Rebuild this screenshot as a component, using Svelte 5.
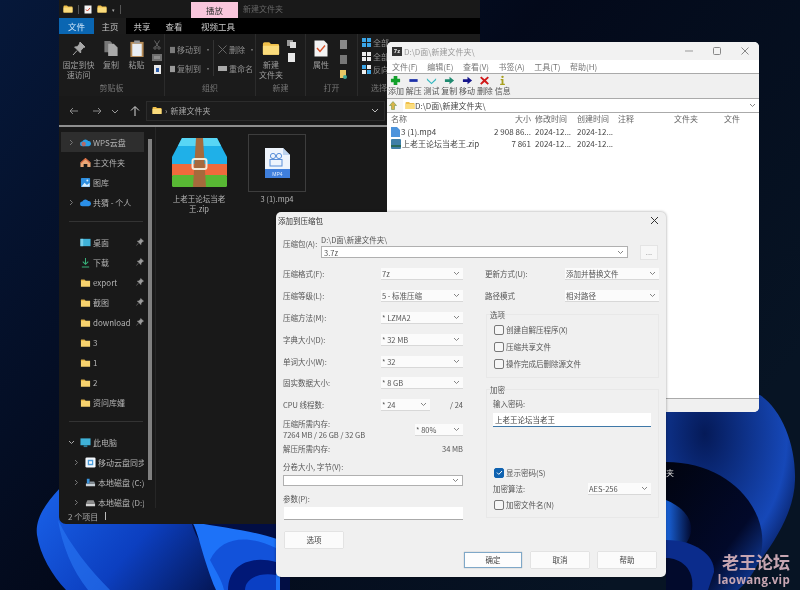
<script>
  const quick = [
    { name: "WPS云盘", icon: "cloudw", arrow: true, active: true },
    { name: "主文件夹", icon: "home" },
    { name: "图库", icon: "gallery" },
    { name: "共猜 - 个人", icon: "cloud", arrow: true, gap: true },
    { name: "桌面", icon: "desk", pin: true },
    { name: "下载", icon: "down", pin: true },
    { name: "export", icon: "folder", pin: true },
    { name: "截图", icon: "folder", pin: true },
    { name: "download", icon: "folder", pin: true },
    { name: "3", icon: "folder" },
    { name: "1", icon: "folder" },
    { name: "2", icon: "folder" },
    { name: "资问库媑", icon: "folder", gap: true },
    { name: "此电脑", icon: "pc", open: true },
    { name: "移动云盘同步盘", icon: "mobile", arrow: true, sub: true },
    { name: "本地磁盘 (C:)", icon: "diskc", arrow: true, sub: true },
    { name: "本地磁盘 (D:)", icon: "disk", arrow: true, sub: true },
  ];

  const szTools = [
    { label: "添加", color: "#12a02a", shape: "plus" },
    { label: "解压", color: "#1c2fa8", shape: "minus" },
    { label: "测试", color: "#35b8c0", shape: "tick" },
    { label: "复制", color: "#1f8a70", shape: "arrow" },
    { label: "移动", color: "#15158a", shape: "arrow" },
    { label: "删除", color: "#d01818", shape: "x" },
    { label: "信息", color: "#a8a020", shape: "info" },
  ];

  const leftRows = [
    { label: "压缩格式(F):", value: "7z" },
    { label: "压缩等级(L):", value: "5 - 标准压缩" },
    { label: "压缩方法(M):", value: "* LZMA2" },
    { label: "字典大小(D):", value: "* 32 MB" },
    { label: "单词大小(W):", value: "* 32" },
    { label: "固实数据大小:", value: "* 8 GB" },
  ];
</script>

{#snippet folder(w, h)}
  <svg width={w} height={h} viewBox="0 0 20 16">
    <path d="M1 3 Q1 1 3 1 H8 L10 3 H18 Q19 3 19 5 V14 Q19 15 18 15 H2 Q1 15 1 14 Z" fill="#f0c04a" />
    <path d="M1 5 H19 V14 Q19 15 18 15 H2 Q1 15 1 14 Z" fill="#fbdc7c" />
  </svg>
{/snippet}

{#snippet chevron()}
  <svg class="chev" width="7" height="5" viewBox="0 0 7 5"><path d="M1 1 L3.5 3.5 L6 1" fill="none" stroke="#777" stroke-width="0.9" /></svg>
{/snippet}

{#snippet pin()}
  <svg width="8" height="8" viewBox="0 0 10 10"><path d="M6 0.5 L9.5 4 L8 4.6 L6.4 6.6 L6.2 8.4 L1.6 3.8 L3.4 3.6 L5.4 2 Z M3 6.4 L0.6 9.4" fill="#9a9a9a" stroke="#9a9a9a" stroke-width="0.6" /></svg>
{/snippet}

{#snippet sideIcon(kind)}
  <svg class="side-ic" width="11" height="11" viewBox="0 0 12 12">
    {#if kind === "folder"}
      <path d="M1 3 H5 L6 4 H11 V10.5 H1 Z" fill="#f7d26e" /><path d="M1 3 H5 L6 4 H1 Z" fill="#e2ac3a" />
    {:else if kind === "cloudw"}
      <path d="M2.5 10 A2.5 2.5 0 0 1 2.5 5 A3.6 3.6 0 0 1 9 4.4 A2.8 2.8 0 0 1 9.4 10 Z" fill="#2a9fe6" /><circle cx="4" cy="7.6" r="2.4" fill="#e0593f" opacity="0.75" />
    {:else if kind === "cloud"}
      <path d="M2.5 10 A2.5 2.5 0 0 1 2.5 5 A3.6 3.6 0 0 1 9 4.4 A2.8 2.8 0 0 1 9.4 10 Z" fill="#2b8fe8" />
    {:else if kind === "home"}
      <path d="M6 1 L11.5 6 V11 H8 V7.5 H4 V11 H0.5 V6 Z" fill="#e9a877" /><path d="M6 1 L11.5 6 L10.6 6.8 L6 2.6 L1.4 6.8 L0.5 6 Z" fill="#d9663d" />
    {:else if kind === "gallery"}
      <rect x="1" y="1" width="10" height="10" rx="1" fill="#2e8fe0" /><path d="M1.5 10.5 L5 6.4 L7.6 8.6 L10.5 6.4 V10.5 Z" fill="#d9eefc" /><circle cx="8" cy="3.8" r="1.1" fill="#d9eefc" />
    {:else if kind === "desk"}
      <rect x="0.5" y="2" width="11" height="8" fill="#3fb2d8" /><rect x="0.5" y="2" width="3" height="8" fill="#7ad0ea" />
    {:else if kind === "down"}
      <path d="M6 1 V8 M3 5 L6 8 L9 5 M2 11 H10" fill="none" stroke="#38b27a" stroke-width="1.1" />
    {:else if kind === "pc"}
      <rect x="0.5" y="1.5" width="11" height="7.5" fill="#3fb2d8" /><rect x="4" y="9" width="4" height="2" fill="#2b7f9c" />
    {:else if kind === "mobile"}
      <rect x="0.5" y="0.5" width="11" height="11" rx="1.5" fill="#f4f8fc" /><rect x="3" y="3" width="6" height="6" fill="#4d9edb" /><rect x="4.4" y="4.6" width="3.2" height="2.8" fill="#f4f8fc" />
    {:else if kind === "diskc"}
      <path d="M1 7 H11 V10 H1 Z" fill="#c9d0d6" /><path d="M2 2 H5 V7 H2 Z" fill="#3a93dc" /><path d="M5 5 H10 L11 7 H5 Z" fill="#88929a" />
    {:else}
      <path d="M1 7 H11 V10 H1 Z" fill="#d2d2d2" /><path d="M2.6 3.6 H9.4 L11 7 H1 Z" fill="#8c8c8c" />
    {/if}
  </svg>
{/snippet}

{#snippet szIcon(tool)}
  <svg width="11" height="11" viewBox="0 0 12 12">
    {#if tool.shape === "plus"}
      <path d="M4 1 H8 V4 H11 V8 H8 V11 H4 V8 H1 V4 H4 Z" fill={tool.color} />
    {:else if tool.shape === "minus"}
      <rect x="1.5" y="4.5" width="9" height="3" fill={tool.color} />
    {:else if tool.shape === "tick"}
      <path d="M1 3.5 L6 8.5 L11 3.5 L11 5.5 L6 10 L1 5.5 Z" fill={tool.color} />
    {:else if tool.shape === "arrow"}
      <path d="M1 4.5 H6 V2 L11 6 L6 10 V7.5 H1 Z" fill={tool.color} />
    {:else if tool.shape === "x"}
      <path d="M2.5 1.5 L6 4.6 L9.5 1.5 L10.8 3 L7.6 6 L10.8 9.2 L9.4 10.6 L6 7.5 L2.6 10.6 L1.2 9.2 L4.4 6 L1.2 3 Z" fill={tool.color} />
    {:else}
      <circle cx="6" cy="2" r="1.3" fill={tool.color} /><path d="M4 4.4 H7 V9.6 H8.6 V11 H3.4 V9.6 H5 V5.8 H4 Z" fill={tool.color} />
    {/if}
  </svg>
{/snippet}

<div class="desktop">
  <svg class="wallpaper" width="800" height="590" viewBox="0 0 800 590">
    <defs>
      <linearGradient id="base" x1="0" y1="0" x2="1" y2="0.6">
        <stop offset="0" stop-color="#06183a" /><stop offset="0.5" stop-color="#03091a" /><stop offset="1" stop-color="#071424" />
      </linearGradient>
      <linearGradient id="sweep" x1="0" y1="0" x2="1" y2="0.4">
        <stop offset="0" stop-color="#1b66ee" /><stop offset="0.55" stop-color="#0c3fc0" /><stop offset="1" stop-color="#03124a" />
      </linearGradient>
      <radialGradient id="orb" cx="0.3" cy="0.2" r="0.85">
        <stop offset="0" stop-color="#051a58" /><stop offset="0.75" stop-color="#1648b8" /><stop offset="1" stop-color="#061a58" />
      </radialGradient>
      <linearGradient id="fold" x1="0" y1="0" x2="1" y2="1">
        <stop offset="0" stop-color="#01040f" /><stop offset="0.65" stop-color="#02092a" /><stop offset="1" stop-color="#1446b4" />
      </linearGradient>
      <linearGradient id="fold2" x1="0" y1="0" x2="1" y2="0">
        <stop offset="0" stop-color="#1a66e0" /><stop offset="1" stop-color="#020a30" />
      </linearGradient>
    </defs>
    <rect width="800" height="590" fill="url(#base)" />
    <path d="M60 488 C44 505 35 520 37 535 C40 555 52 575 66 590 L290 590 L290 470 L60 470 Z" fill="url(#sweep)" />
    <path d="M58 520 C62 545 72 570 88 590 L110 590 C90 570 70 545 58 520 Z" fill="#2a78f5" opacity="0.6" />
    <path d="M192 524 C200 555 235 575 262 590 L290 590 L290 524 Z" fill="#020e44" />
    <path d="M192 522 C198 530 203 560 216 590 L280 590 L280 540 C250 530 225 528 192 522 Z" fill="#1d72f8" />
    <path d="M210 560 C222 535 250 535 276 548 L276 590 L224 590 C222 580 215 570 210 560 Z" fill="#1252da" />
    <path d="M228 590 C228 565 250 555 276 562 L276 590 Z" fill="#011877" />
    <path d="M245 590 C245 578 260 572 276 575 L276 590 Z" fill="#0a3fc4" />
    <path d="M666 412 L760 395 C782 410 796 445 795 480 C794 520 765 555 738 590 L666 590 Z" fill="url(#orb)" />
    <path d="M666 462 C710 462 745 485 758 518 C770 550 755 575 738 590 L666 590 Z" fill="url(#fold)" />
    <path d="M666 500 C690 510 700 530 682 548 L666 545 Z" fill="url(#fold2)" />
    <path d="M666 540 C695 540 715 555 714 572 L708 590 L666 590 Z" fill="#0b2c8c" />
    <path d="M666 558 C680 558 695 568 692 590 L666 590 Z" fill="#020a2c" />
  </svg>
  <span class="desk-label">夹</span>

  <section class="win explorer">
    <header class="ex-title">
      <div class="qat">
        {@render folder(10, 8)}
        <i class="sep"></i>
        <svg width="8" height="9" viewBox="0 0 8 9"><rect x="0.5" y="0.5" width="7" height="8" fill="#f4f4f4" /><path d="M2 4.5 L3.4 6 L6 3" fill="none" stroke="#d8442c" /></svg>
        {@render folder(10, 8)}
        <span class="qdrop">▾</span>
        <i class="sep"></i>
      </div>
      <div class="play-tab">播放</div>
      <div class="ex-name">新建文件夹</div>
    </header>

    <nav class="ex-tabs">
      <span class="tab file">文件</span>
      <span class="tab home">主页</span>
      <span class="tab">共享</span>
      <span class="tab">查看</span>
      <span class="tab wide">视频工具</span>
    </nav>

    <div class="ribbon">
      <div class="group clip">
        <div class="gbody">
          <div class="big first">
            <svg width="14" height="15" viewBox="0 0 14 15"><path d="M8 1 L13 6 L11.4 6.6 L8.8 9.4 L8.6 12 L2.6 6 L5.2 5.8 L7.6 3 Z M5 9.6 L1 14" fill="#a8a8a8" stroke="#a8a8a8" /></svg>
            <span>固定到快<br />速访问</span>
          </div>
          <div class="big">
            <svg width="16" height="18" viewBox="0 0 16 18"><path d="M1 1 H7 L9 3 V13 H1 Z" fill="#777" /><path d="M5 4 H11 L15 8 V17 H5 Z" fill="#a9a9a9" /></svg>
            <span>复制</span>
          </div>
          <div class="big">
            <svg width="16" height="18" viewBox="0 0 16 18"><rect x="1" y="2" width="14" height="16" fill="#b48a56" /><rect x="3" y="4" width="10" height="13" fill="#e9eef4" /><rect x="5" y="0.5" width="6" height="3" fill="#999" /></svg>
            <span>粘贴</span>
          </div>
          <div class="smalls">
            <svg width="8" height="10" viewBox="0 0 8 10"><path d="M1.5 0.5 L5.5 7 M6.5 0.5 L2.5 7" stroke="#666" fill="none" /><circle cx="2" cy="8" r="1.2" fill="none" stroke="#666" /><circle cx="6" cy="8" r="1.2" fill="none" stroke="#666" /></svg>
            <svg width="10" height="7" viewBox="0 0 10 7"><rect width="10" height="7" fill="#6e6e6e" /><rect x="2" y="2" width="6" height="3" fill="#8e8e8e" /></svg>
            <svg width="7" height="9" viewBox="0 0 7 9"><rect width="7" height="9" fill="#e8e8e8" /><rect x="2" y="3" width="3" height="4" fill="#2d5fae" /></svg>
          </div>
        </div>
        <div class="gname">剪贴板</div>
      </div>

      <div class="group org">
        <div class="gbody">
          <div class="lines move">
            <div class="line"><svg width="8" height="10" viewBox="0 0 8 10"><rect width="8" height="10" fill="#7b7b7b" /></svg>移动到<em>·</em></div>
            <div class="line"><svg width="8" height="10" viewBox="0 0 8 10"><rect width="8" height="10" fill="#9a9a9a" /></svg>复制到<em>·</em></div>
          </div>
          <i class="vline"></i>
          <div class="lines erase">
            <div class="line"><svg width="9" height="9" viewBox="0 0 9 9"><path d="M0.5 0.5 L8.5 8.5 M8.5 0.5 L0.5 8.5" stroke="#666" /></svg>删除<em>·</em></div>
            <div class="line"><svg width="9" height="5" viewBox="0 0 9 5"><rect width="9" height="5" fill="#aaa" /></svg>重命名</div>
          </div>
        </div>
        <div class="gname">组织</div>
      </div>

      <div class="group newg">
        <div class="gbody">
          <div class="big wide">
            {@render folder(18, 15)}
            <span>新建<br />文件夹</span>
          </div>
          <div class="smalls tight">
            <svg width="9" height="8" viewBox="0 0 9 8"><rect width="6" height="6" fill="#999" /><rect x="3" y="2" width="6" height="6" fill="#ddd" /></svg>
            <svg width="7" height="9" viewBox="0 0 7 9"><rect width="7" height="9" fill="#e8e8e8" /></svg>
          </div>
        </div>
        <div class="gname">新建</div>
      </div>

      <div class="group openg">
        <div class="gbody">
          <div class="big wide">
            <svg width="14" height="17" viewBox="0 0 14 17"><path d="M0.5 0.5 H10 L13.5 4 V16.5 H0.5 Z" fill="#f3f3f3" /><path d="M3 8 L6 11.5 L11 5.5" stroke="#d8542c" stroke-width="1.4" fill="none" /></svg>
            <span>属性</span>
          </div>
          <div class="smalls wider">
            <svg width="7" height="9" viewBox="0 0 7 9"><rect width="7" height="9" fill="#888" /></svg>
            <svg width="7" height="9" viewBox="0 0 7 9"><rect width="7" height="9" fill="#777" /></svg>
            <svg width="7" height="9" viewBox="0 0 7 9"><rect width="6" height="8" fill="#e8c866" /><circle cx="5" cy="7" r="2" fill="#4a9" /></svg>
          </div>
        </div>
        <div class="gname">打开</div>
      </div>

      <div class="group sel">
        <div class="gbody">
          <div class="lines select">
            <div class="line"><svg width="9" height="9" viewBox="0 0 9 9"><path d="M0 0 H4 V4 H0 Z M5 0 H9 V4 H5 Z M0 5 H4 V9 H0 Z M5 5 H9 V9 H5 Z" fill="#3ba6e8" /></svg>全部</div>
            <div class="line"><svg width="9" height="9" viewBox="0 0 9 9"><path d="M0 0 H4 V4 H0 Z M5 0 H9 V4 H5 Z M0 5 H4 V9 H0 Z M5 5 H9 V9 H5 Z" fill="#eee" /></svg>全部</div>
            <div class="line"><svg width="9" height="9" viewBox="0 0 9 9"><path d="M0 0 H4 V4 H0 Z M5 5 H9 V9 H5 Z" fill="#3ba6e8" /><path d="M5 0 H9 V4 H5 Z M0 5 H4 V9 H0 Z" fill="#eee" /></svg>反向</div>
          </div>
        </div>
        <div class="gname">选择</div>
      </div>
    </div>

    <div class="ex-nav">
      <svg width="72" height="12" viewBox="0 0 72 12" class="navbtns">
        <path d="M2 6 H10 M5 3 L2 6 L5 9" stroke="#8a8a8a" fill="none" />
        <path d="M25 6 H33 M30 3 L33 6 L30 9" stroke="#8a8a8a" fill="none" />
        <path d="M44 5 L47 8 L50 5" stroke="#999" fill="none" />
        <path d="M67 11 V2 M63 5.5 L67 1.5 L71 5.5" stroke="#d8d8d8" fill="none" />
      </svg>
      <div class="ex-addr">
        {@render folder(10, 9)}
        <span class="crumb">›</span>
        <span>新建文件夹</span>
        <svg class="addr-chev" width="8" height="5" viewBox="0 0 8 5"><path d="M1 1 L4 4 L7 1" stroke="#bbb" fill="none" /></svg>
      </div>
    </div>

    <div class="ex-body">
      <aside class="side">
        {#each quick as item}
          <div class="side-item" class:active={item.active} class:sub={item.sub}>
            <span class="arrow">
              {#if item.open}
                <svg width="7" height="7" viewBox="0 0 7 7"><path d="M1 2 L3.5 4.5 L6 2" fill="none" stroke="#aaa" /></svg>
              {:else if item.arrow}
                <svg width="7" height="7" viewBox="0 0 7 7"><path d="M2 1 L4.5 3.5 L2 6" fill="none" stroke="#777" /></svg>
              {/if}
            </span>
            {@render sideIcon(item.icon)}
            <span class="side-name">{item.name}</span>
            {#if item.pin}<span class="pin">{@render pin()}</span>{/if}
          </div>
          {#if item.gap}<div class="side-sep"></div>{/if}
        {/each}
        <div class="scroll"></div>
      </aside>
      <div class="files">
        <figure class="file-tile">
          <div class="thumb">
            <svg width="55" height="52" viewBox="0 0 55 52">
              <path d="M10 1 H45 L55 20 V28 H0 V20 Z" fill="#1fb0e8" />
              <path d="M10 1 H45 L49 9 H6 Z" fill="#58d6f5" />
              <rect y="27" width="55" height="12" fill="#ee6a3c" />
              <rect y="38" width="55" height="12" rx="1.5" fill="#58b834" />
              <path d="M24 1 H31 L34 50 H21 Z" fill="#a66a3c" />
              <rect x="20.5" y="22" width="14" height="10" rx="2" fill="none" stroke="#f2ead8" stroke-width="2" />
            </svg>
          </div>
          <figcaption>上老王论坛当老<br />王.zip</figcaption>
        </figure>
        <figure class="file-tile selected">
          <div class="thumb box">
            <svg width="25" height="30" viewBox="0 0 25 30">
              <path d="M0 0 H18 L25 7 V30 H0 Z" fill="#eef4fc" />
              <path d="M18 0 L25 7 H18 Z" fill="#bcd2ee" />
              <rect y="21" width="25" height="9" fill="#3f7fdc" />
              <circle cx="8" cy="8" r="2.6" fill="none" stroke="#5a8fd8" />
              <circle cx="14" cy="8" r="2.6" fill="none" stroke="#5a8fd8" />
              <rect x="5" y="11.5" width="12" height="6.5" fill="none" stroke="#5a8fd8" />
              <text x="12.5" y="28" class="mp4tag">MP4</text>
            </svg>
          </div>
          <figcaption>3 (1).mp4</figcaption>
        </figure>
      </div>
    </div>

    <footer class="ex-status"><span>2 个项目</span><i></i></footer>
  </section>

  <section class="win sz">
    <header class="sz-title">
      <span class="sz-logo">7z</span>
      <span class="sz-path">D:\D面\新建文件夹\</span>
      <div class="controls">
        <svg width="10" height="10" viewBox="0 0 10 10"><path d="M1 5 H9" stroke="#999" /></svg>
        <svg width="10" height="10" viewBox="0 0 10 10"><rect x="1.5" y="1.5" width="7" height="7" rx="1" fill="none" stroke="#888" /></svg>
        <svg width="10" height="10" viewBox="0 0 10 10"><path d="M1.5 1.5 L8.5 8.5 M8.5 1.5 L1.5 8.5" stroke="#888" /></svg>
      </div>
    </header>
    <div class="sz-menu">
      <span>文件(F)</span><span>编辑(E)</span><span>查看(V)</span><span>书签(A)</span><span>工具(T)</span><span>帮助(H)</span>
    </div>
    <div class="sz-tools">
      {#each szTools as tool}
        <div class="sz-tool">{@render szIcon(tool)}<span>{tool.label}</span></div>
      {/each}
    </div>
    <div class="sz-addr">
      <svg width="8" height="9" viewBox="0 0 8 9"><path d="M4 0.5 L7.5 4.5 H5.5 V8.5 H2.5 V4.5 H0.5 Z" fill="#d9b44a" stroke="#5a8a3a" stroke-width="0.5" /></svg>
      <div class="sz-addr-box">
        {@render folder(10, 9)}
        <span>D:\D面\新建文件夹\</span>
        <span class="addr-right">{@render chevron()}</span>
      </div>
    </div>
    <div class="sz-list">
      <div class="sz-row head">
        <span>名称</span><span class="r">大小</span><span class="l">修改时间</span><span>创建时间</span><span>注释</span><span>文件夹</span><span>文件</span>
      </div>
      <div class="sz-row item">
        <span class="nm"><svg width="9" height="10" viewBox="0 0 9 10"><path d="M0 0 H6 L9 3 V10 H0 Z" fill="#4d94dc" /></svg>3 (1).mp4</span>
        <span class="r">2 908 86...</span><span class="l">2024-12...</span><span>2024-12...</span><span></span><span></span><span></span>
      </div>
      <div class="sz-row item">
        <span class="nm"><svg width="10" height="10" viewBox="0 0 10 10"><rect width="10" height="10" rx="1" fill="#3f7fa8" /><rect y="6" width="10" height="2" fill="#2a6a5a" /></svg>上老王论坛当老王.zip</span>
        <span class="r">7 861</span><span class="l">2024-12...</span><span>2024-12...</span><span></span><span></span><span></span>
      </div>
    </div>
    <footer class="sz-status"></footer>
  </section>

  <section class="win dialog">
    <header class="dlg-title">
      <span>添加到压缩包</span>
      <svg width="9" height="9" viewBox="0 0 9 9"><path d="M1 1 L8 8 M8 1 L1 8" stroke="#333" /></svg>
    </header>

    <div class="archive">
      <span class="lbl arch-lbl">压缩包(A):</span>
      <div class="arch-main">
        <span class="lbl">D:\D面\新建文件夹\</span>
        <div class="combo outlined"><span>3.7z</span>{@render chevron()}</div>
      </div>
      <div class="dots">...</div>
    </div>

    <div class="columns">
      <div class="col left">
        {#each leftRows as row}
          <div class="row">
            <span class="lbl">{row.label}</span>
            <div class="combo"><span>{row.value}</span>{@render chevron()}</div>
          </div>
        {/each}
        <div class="row">
          <span class="lbl">CPU 线程数:</span>
          <div class="combo short"><span>* 24</span>{@render chevron()}</div>
          <span class="lbl total">/ 24</span>
        </div>
        <div class="mem">
          <div><span class="lbl">压缩所需内存:</span><span class="lbl">7264 MB / 26 GB / 32 GB</span></div>
          <div class="combo tiny"><span>* 80%</span>{@render chevron()}</div>
        </div>
        <div class="unpack"><span class="lbl">解压所需内存:</span><span class="lbl">34 MB</span></div>
        <span class="lbl vol">分卷大小, 字节(V):</span>
        <div class="combo outlined full"><span></span>{@render chevron()}</div>
        <span class="lbl par">参数(P):</span>
        <div class="field"></div>
        <div class="btn opts">选项</div>
      </div>

      <div class="col right">
        <div class="row r2">
          <span class="lbl">更新方式(U):</span>
          <div class="combo rwide"><span>添加并替换文件</span>{@render chevron()}</div>
        </div>
        <div class="row r2">
          <span class="lbl">路径模式</span>
          <div class="combo rwide"><span>相对路径</span>{@render chevron()}</div>
        </div>
        <fieldset class="opts-group">
          <legend>选项</legend>
          <label class="check"><i></i>创建自解压程序(X)</label>
          <label class="check"><i></i>压缩共享文件</label>
          <label class="check"><i></i>操作完成后删除源文件</label>
        </fieldset>
        <fieldset class="enc-group">
          <legend>加密</legend>
          <span class="lbl">输入密码:</span>
          <div class="pass">上老王论坛当老王</div>
          <label class="check on">
            <i><svg width="9" height="9" viewBox="0 0 9 9"><path d="M2 4.6 L3.8 6.4 L7 3" fill="none" stroke="#fff" /></svg></i>显示密码(S)
          </label>
          <div class="algo">
            <span class="lbl">加密算法:</span>
            <div class="combo algo-c"><span>AES-256</span>{@render chevron()}</div>
          </div>
          <label class="check"><i></i>加密文件名(N)</label>
        </fieldset>
      </div>
    </div>

    <div class="actions">
      <div class="btn primary">确定</div>
      <div class="btn">取消</div>
      <div class="btn">帮助</div>
    </div>
  </section>

  <div class="mark"><b>老王论坛</b><b class="url">laowang.vip</b></div>
</div>

<style>
  :global(body) {
    margin: 0;
    background: #03091a;
  }
  .desktop {
    position: relative;
    width: 800px;
    height: 590px;
    overflow: hidden;
    font-family: "Noto Sans CJK SC", "Liberation Sans", sans-serif;
    font-size: 8px;
    filter: blur(0.3px);
  }
  .wallpaper {
    position: absolute;
    inset: 0;
  }
  .desk-label {
    position: absolute;
    left: 666px;
    top: 467px;
    color: #ddd;
  }
  .win {
    position: absolute;
    box-sizing: border-box;
    display: flex;
    flex-direction: column;
    overflow: hidden;
  }

  /* explorer */
  .explorer {
    left: 59px;
    top: 0;
    width: 421px;
    height: 524px;
    background: #191919;
    color: #d6d6d6;
    border-radius: 0 0 7px 7px;
  }
  .ex-title {
    height: 18px;
    display: flex;
    align-items: stretch;
    background: #191919;
  }
  .qat {
    width: 132px;
    display: flex;
    align-items: center;
    gap: 5px;
    padding-left: 4px;
    box-sizing: border-box;
  }
  .qat .sep {
    width: 1px;
    height: 9px;
    background: #555;
  }
  .qdrop {
    color: #aaa;
    font-size: 5px;
  }
  .play-tab {
    width: 47px;
    margin-top: 2px;
    background: #f9c6dc;
    color: #333;
    font-size: 8.5px;
    display: flex;
    align-items: center;
    justify-content: center;
  }
  .ex-name {
    padding-left: 5px;
    color: #666;
    font-size: 8px;
    line-height: 18px;
  }
  .ex-tabs {
    height: 16px;
    display: flex;
    background: #000;
    font-size: 8.5px;
    line-height: 16px;
  }
  .tab {
    width: 32px;
    text-align: center;
    color: #c8c8c8;
  }
  .tab.file {
    width: 35px;
    background: #0a66b2;
    color: #cfe6fa;
  }
  .tab.home {
    background: #1c1c1c;
  }
  .tab.wide {
    width: 48px;
    padding-left: 4px;
  }
  .ribbon {
    height: 62px;
    display: flex;
    background: #1b1b1b;
    font-size: 8px;
    color: #9e9e9e;
  }
  .group {
    box-sizing: border-box;
    display: flex;
    flex-direction: column;
    border-right: 1px solid #2b2b2b;
  }
  .gbody {
    height: 48px;
    display: flex;
    padding-top: 6px;
    box-sizing: border-box;
  }
  .gname {
    flex: 1;
    text-align: center;
    color: #777;
    line-height: 12px;
  }
  .clip { width: 106px; }
  .org { width: 91px; }
  .newg { width: 50px; }
  .openg { width: 52px; }
  .sel { flex: 1; border: 0; }
  .sel .gname {
    width: 42px;
  }
  .big {
    width: 26px;
    display: flex;
    flex-direction: column;
    align-items: center;
    gap: 3px;
    line-height: 10px;
    text-align: center;
  }
  .big svg {
    height: 17px;
  }
  .big.first {
    width: 40px;
  }
  .big.wide {
    width: 30px;
  }
  .smalls {
    width: 14px;
    margin-left: 1px;
    display: flex;
    flex-direction: column;
    align-items: center;
    gap: 4px;
  }
  .smalls.tight {
    gap: 5px;
    margin-left: -2px;
  }
  .smalls.wider {
    margin-left: 0;
    gap: 6px;
  }
  .lines {
    display: flex;
    flex-direction: column;
    gap: 8px;
    padding-left: 5px;
  }
  .lines.move {
    width: 47px;
    box-sizing: border-box;
    padding-top: 4px;
  }
  .lines.erase {
    padding-left: 4px;
    padding-top: 4px;
  }
  .lines.select {
    gap: 2.5px;
    padding-left: 4px;
    margin-top: -3px;
  }
  .line {
    display: flex;
    align-items: center;
    gap: 2px;
    height: 11px;
    white-space: nowrap;
    color: #8f8f8f;
  }
  .line em {
    font-style: normal;
    margin-left: 1px;
  }
  .vline {
    width: 1px;
    height: 36px;
    margin-left: 1px;
    background: #333;
    flex: none;
  }
  .ex-nav {
    height: 31px;
    flex: none;
    display: flex;
    align-items: center;
    border-bottom: 2px solid #8e8e8e;
    box-sizing: border-box;
    padding-left: 9px;
  }
  .navbtns {
    flex: none;
  }
  .ex-addr {
    width: 239px;
    height: 20px;
    margin-left: 6px;
    box-sizing: border-box;
    border: 1px solid #2c2c2c;
    display: flex;
    align-items: center;
    gap: 3px;
    padding-left: 5px;
    color: #a8a8a8;
    font-size: 8px;
    background: #1c1c1c;
  }
  .addr-chev {
    margin-left: auto;
    margin-right: 5px;
  }
  .ex-body {
    flex: 1;
    display: flex;
    min-height: 0;
  }
  .side {
    position: relative;
    width: 97px;
    flex: none;
    box-sizing: border-box;
    padding: 5px 0 0 2px;
    border-right: 1px solid #262626;
    overflow: hidden;
  }
  .side-item {
    width: 83px;
    height: 20px;
    display: flex;
    align-items: center;
    gap: 2px;
    padding-left: 7px;
    box-sizing: border-box;
    white-space: nowrap;
    color: #b4b4b4;
    font-size: 8px;
  }
  .side-item.active {
    background: #2e2e2e;
  }
  .side-item.sub {
    padding-left: 12px;
  }
  .side-ic {
    flex: none;
  }
  .arrow {
    width: 10px;
    flex: none;
    display: flex;
    align-items: center;
  }
  .side-name {
    overflow: hidden;
    flex: 1;
  }
  .pin {
    display: flex;
    flex: none;
  }
  .side-sep {
    width: 74px;
    height: 1px;
    margin: 9px 0 10px 8px;
    background: #333;
  }
  .scroll {
    position: absolute;
    left: 89px;
    top: 12px;
    width: 4px;
    height: 341px;
    background: #808080;
  }
  .files {
    flex: 1;
    display: flex;
    align-items: flex-start;
    gap: 20px;
    padding: 7px 0 0 14px;
    overflow: hidden;
  }
  .file-tile {
    margin: 0;
    width: 58px;
    display: flex;
    flex-direction: column;
    align-items: center;
    text-align: center;
    line-height: 10px;
    color: #b8b8b8;
    font-size: 7.5px;
    white-space: nowrap;
  }
  .thumb {
    height: 58px;
    width: 58px;
    box-sizing: border-box;
    display: flex;
    align-items: center;
    justify-content: center;
    margin-bottom: 2px;
  }
  .thumb.box {
    border: 1px solid #3d3d3d;
  }
  .mp4tag {
    font-size: 5px;
    fill: #dde9fa;
    text-anchor: middle;
    font-family: "Liberation Sans", sans-serif;
  }
  .ex-status {
    height: 16px;
    flex: none;
    display: flex;
    align-items: center;
    gap: 7px;
    padding-left: 9px;
    color: #aaa;
    font-size: 8px;
  }
  .ex-status i {
    width: 1px;
    height: 8px;
    background: #bbb;
  }

  /* 7-zip file manager */
  .sz {
    left: 387px;
    top: 42px;
    width: 372px;
    height: 370px;
    background: #fff;
    border-radius: 5px;
    color: #555;
    font-size: 8px;
  }
  .sz-title {
    height: 18px;
    flex: none;
    background: #f2f2f2;
    display: flex;
    align-items: center;
    padding-left: 5px;
    color: #999;
  }
  .sz-logo {
    width: 10px;
    height: 9px;
    background: #333;
    color: #eee;
    font-size: 6px;
    line-height: 9px;
    text-align: center;
    font-family: "Liberation Sans", sans-serif;
    font-weight: bold;
  }
  .sz-path {
    margin-left: 2px;
  }
  .controls {
    margin-left: auto;
    display: flex;
    gap: 18px;
    padding-right: 9px;
  }
  .sz-menu {
    flex: none;
    display: flex;
    gap: 9.5px;
    padding-left: 5px;
    line-height: 13px;
    color: #777;
    border-bottom: 1px solid #aaa;
    box-sizing: border-box;
    height: 14px;
  }
  .sz-tools {
    height: 25px;
    flex: none;
    background: #f0f0f0;
    display: flex;
    border-bottom: 1px solid #aaa;
    box-sizing: border-box;
    padding-left: 0;
  }
  .sz-tool {
    width: 17.8px;
    display: flex;
    flex-direction: column;
    align-items: center;
    padding-top: 1px;
    line-height: 10px;
    color: #555;
    white-space: nowrap;
    font-size: 8px;
  }
  .sz-addr {
    height: 14px;
    flex: none;
    display: flex;
    align-items: center;
    gap: 6px;
    padding-left: 2px;
    border-bottom: 1px solid #aaa;
    box-sizing: border-box;
    background: #f6f6f6;
  }
  .sz-addr-box {
    flex: 1;
    height: 13px;
    background: #fff;
    display: flex;
    align-items: center;
    gap: 0;
    padding-left: 2px;
    color: #444;
    line-height: 11px;
  }
  .addr-right {
    margin-left: auto;
    padding-right: 3px;
    display: flex;
  }
  .sz-list {
    flex: 1;
    padding-left: 4px;
  }
  .sz-row {
    display: grid;
    grid-template-columns: 100px 40px 46px 41px 56px 50px 30px;
    white-space: nowrap;
    height: 12px;
    line-height: 12px;
    color: #444;
  }
  .sz-row.head {
    color: #666;
    margin-bottom: 1px;
  }
  .sz-row .r {
    text-align: right;
  }
  .sz-row .l {
    padding-left: 4px;
  }
  .nm {
    display: flex;
    align-items: center;
    gap: 1px;
  }
  .sz-status {
    height: 14px;
    flex: none;
    background: #f0f0f0;
    border-top: 1px solid #aaa;
    box-sizing: border-box;
  }

  /* add to archive dialog */
  .dialog {
    left: 276px;
    top: 212px;
    width: 390px;
    height: 365px;
    background: #f0f0f0;
    border-radius: 5px;
    box-shadow: 0 0 3px rgba(0, 0, 0, 0.4);
    color: #444;
    font-size: 7.5px;
  }
  .dlg-title {
    height: 14px;
    flex: none;
    display: flex;
    align-items: center;
    justify-content: space-between;
    box-sizing: border-box;
    padding: 3px 7px 0 2px;
    color: #333;
    font-size: 7.5px;
  }
  .lbl {
    line-height: 11px;
    white-space: nowrap;
    color: #555;
  }
  .archive {
    display: flex;
    padding: 8px 8px 0 7px;
    height: 37px;
    box-sizing: border-box;
    flex: none;
  }
  .arch-lbl {
    width: 38px;
    padding-top: 4px;
  }
  .arch-main {
    width: 307px;
    display: flex;
    flex-direction: column;
    gap: 1px;
  }
  .dots {
    width: 18px;
    height: 15px;
    margin: 11px 0 0 12px;
    background: #f7f7f7;
    border: 1px solid #e4e4e4;
    box-sizing: border-box;
    text-align: center;
    line-height: 12px;
    color: #999;
    flex: none;
  }
  .combo {
    width: 82px;
    height: 11px;
    background: #fbfbfb;
    display: flex;
    align-items: center;
    justify-content: space-between;
    padding: 0 3px 0 1px;
    box-sizing: border-box;
    color: #555;
    flex: none;
    font-size: 7.5px;
    white-space: nowrap;
    box-shadow: 0 1px 0 #d8d8d8;
  }
  .combo.outlined {
    width: auto;
    height: 12px;
    background: #fff;
    border: 1px solid #b0b0b0;
    padding-left: 2px;
    box-shadow: none;
  }
  .combo.full {
    width: 180px;
    height: 11px;
    margin-top: 3px;
  }
  .combo.short {
    width: 49px;
  }
  .combo.tiny {
    width: 48px;
    margin-top: 6px;
  }
  .combo.rwide {
    width: 94px;
  }
  .combo.algo-c {
    width: 63px;
  }
  .columns {
    display: flex;
    flex: 1;
    min-height: 0;
    padding: 0 7px;
    gap: 22px;
  }
  .col {
    display: flex;
    flex-direction: column;
  }
  .left {
    width: 180px;
  }
  .right {
    width: 174px;
  }
  .row {
    height: 21.8px;
    flex: none;
    display: flex;
    align-items: center;
  }
  .row .lbl {
    width: 98px;
  }
  .row.r2 .lbl {
    width: 80px;
  }
  .row .total {
    width: auto;
    margin-left: auto;
  }
  .mem {
    display: flex;
    justify-content: space-between;
    height: 26px;
    flex: none;
    margin-top: 2px;
  }
  .mem > div:first-child {
    display: flex;
    flex-direction: column;
  }
  .unpack {
    display: flex;
    justify-content: space-between;
    margin-top: -1px;
  }
  .vol {
    margin-top: 7px;
  }
  .par {
    margin-top: 7px;
  }
  .field {
    height: 13px;
    width: 179px;
    margin: 3px 0 0 1px;
    background: #fff;
    border-bottom: 1px solid #aaa;
    box-sizing: border-box;
    flex: none;
  }
  .btn {
    width: 58px;
    height: 16px;
    background: #fbfbfb;
    box-shadow: 0 0 1px rgba(0, 0, 0, 0.3);
    text-align: center;
    line-height: 16px;
    color: #444;
    flex: none;
  }
  .opts {
    margin: 12px 0 0 2px;
  }
  .actions {
    position: absolute;
    left: 188px;
    top: 340px;
    display: flex;
    gap: 9px;
  }
  .primary {
    box-sizing: border-box;
    border: 1px solid #7fa8c8;
    line-height: 14px;
    background: #fdfdfd;
  }
  fieldset {
    margin: 0;
    padding: 0;
    border: 1px solid #e8e8e8;
    display: flex;
    flex-direction: column;
    width: 173px;
    box-sizing: border-box;
    margin-left: 1px;
    flex: none;
  }
  legend {
    margin-left: -4px;
    padding: 0;
    color: #555;
    line-height: 10px;
    font-size: 7.5px;
  }
  .opts-group {
    height: 68px;
    margin-top: 3.4px;
    padding: 4px 0 0 7px;
    gap: 5px;
  }
  .enc-group {
    height: 133px;
    margin-top: 7px;
    padding: 3.5px 0 0 6px;
  }
  .enc-group legend {
    margin-left: -3px;
  }
  .check {
    display: flex;
    align-items: center;
    gap: 2px;
    height: 12px;
    white-space: nowrap;
    color: #555;
  }
  .check i {
    width: 8px;
    height: 8px;
    border: 1px solid #777;
    border-radius: 2px;
    background: #f6f6f6;
    flex: none;
    display: flex;
  }
  .check.on i {
    background: #0f62b0;
    border-color: #0f62b0;
  }
  .check.on svg {
    margin: -0.5px;
  }
  .pass {
    width: 158px;
    height: 14px;
    margin-top: 3.5px;
    padding-left: 2px;
    box-sizing: border-box;
    background: #fff;
    border-bottom: 1px solid #3f78a8;
    line-height: 13px;
    color: #444;
    flex: none;
  }
  .enc-group .check.on {
    margin-top: 40px;
    margin-left: 1px;
  }
  .algo {
    width: 158px;
    display: flex;
    justify-content: space-between;
    align-items: center;
    margin-top: 4px;
  }
  .enc-group .check:last-child {
    margin-top: 5px;
    margin-left: 1px;
  }

  .mark {
    position: absolute;
    right: 10px;
    bottom: 2px;
    display: flex;
    flex-direction: column;
    align-items: flex-end;
    color: #c7a6b2;
    font-family: "Noto Sans CJK SC", sans-serif;
    font-size: 17px;
    line-height: 21px;
  }
  .mark .url {
    font-family: "Open Sans", "Liberation Sans", sans-serif;
    font-size: 11.5px;
    line-height: 16px;
    letter-spacing: 0.3px;
  }
</style>
